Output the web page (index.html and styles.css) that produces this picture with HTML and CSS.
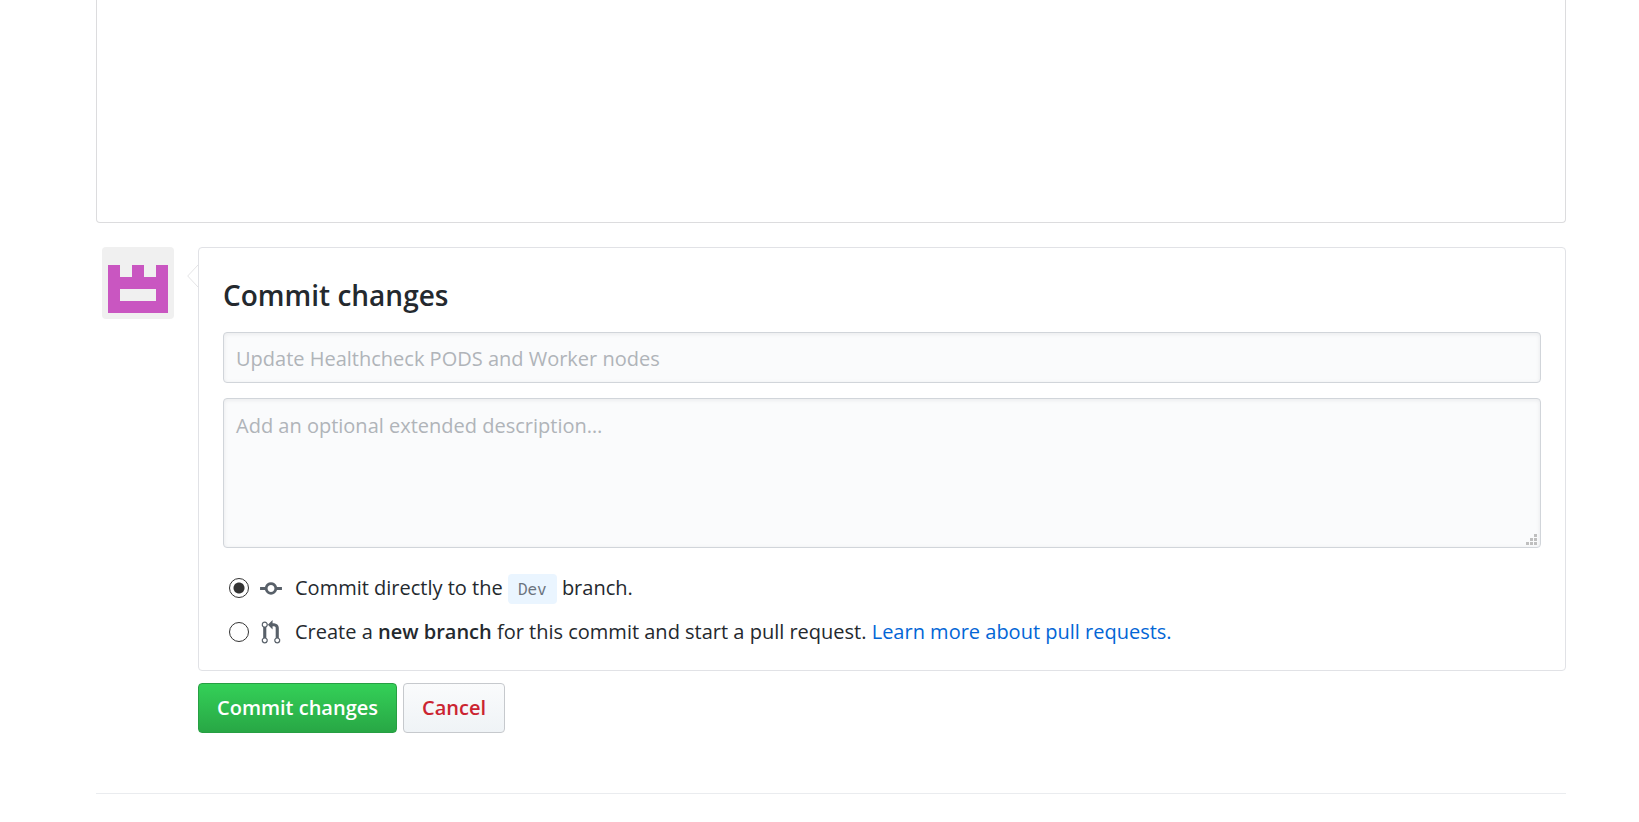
FILE: index.html
```html
<!DOCTYPE html>
<html lang="en">
<head>
<meta charset="utf-8">
<title>Commit changes</title>
<link rel="stylesheet" href="styles.css">
</head>
<body>
<main class="page">
  <div class="editor"></div>
  <form class="commit">
    <svg class="avatar" viewBox="0 0 72 72" role="img" aria-label="User avatar">
      <rect width="72" height="72" fill="#f0f0f0"/>
      <path fill="#c956c1" fill-rule="evenodd" d="M6 18h12v12h12V18h12v12h12V18h12v48H6zM18 42v12h36V42z"/>
    </svg>
    <div class="commit-body">
      <section class="panel">
        <svg class="caret" viewBox="0 0 11 24" aria-hidden="true">
          <path d="M11 1L.7 12 11 23" fill="#fff" stroke="#e4e4e6"/>
        </svg>
        <h1 class="title">Commit changes</h1>
        <input class="field" type="text" aria-label="Commit summary" placeholder="Update Healthcheck PODS and Worker nodes">
        <div class="description">
          <textarea class="field field-area" aria-label="Extended description" placeholder="Add an optional extended description…"></textarea>
          <svg class="grip" viewBox="0 0 12 12" aria-hidden="true">
            <path fill="#bfbfbf" d="M8 0h3v3H8zM4 4h3v3H4zM8 4h3v3H8zM0 8h3v3H0zM4 8h3v3H4zM8 8h3v3H8z"/>
          </svg>
        </div>
        <div class="choices">
          <div class="choice">
            <input class="radio" type="radio" name="target" id="direct" checked>
            <svg class="icon" viewBox="-0.5 0 15 16" aria-hidden="true"><path d="M10.86 7c-.45-1.72-2-3-3.86-3-1.86 0-3.41 1.28-3.86 3H0v2h3.14c.45 1.72 2 3 3.86 3 1.86 0 3.41-1.28 3.86-3H14V7h-3.14zM7 10.2c-1.22 0-2.2-.98-2.2-2.2 0-1.22.98-2.2 2.2-2.2 1.22 0 2.2.98 2.2 2.2 0 1.22-.98 2.2-2.2 2.2z"/></svg>
            <label for="direct">Commit directly to the <code class="branch">Dev</code> branch.</label>
          </div>
          <div class="choice">
            <input class="radio" type="radio" name="target" id="pull">
            <svg class="icon" viewBox="-1.5 0 15 16" aria-hidden="true"><path d="M11 11.28V5c-.03-.78-.34-1.47-.94-2.06C9.46 2.35 8.78 2.03 8 2H7V0L4 3l3 3V4h1c.27.02.48.11.69.31.21.2.3.42.31.69v6.28A1.993 1.993 0 0 0 10 15a1.993 1.993 0 0 0 1-3.72zm-1 2.92c-.66 0-1.2-.55-1.2-1.2 0-.65.55-1.2 1.2-1.2.65 0 1.2.55 1.2 1.2 0 .65-.55 1.2-1.2 1.2zM4 3c0-1.11-.89-2-2-2a1.993 1.993 0 0 0-1 3.72v6.56A1.993 1.993 0 0 0 2 15a1.993 1.993 0 0 0 1-3.72V4.72c.59-.34 1-.98 1-1.72zm-.8 10c0 .66-.55 1.2-1.2 1.2-.65 0-1.2-.55-1.2-1.2 0-.65.55-1.2 1.2-1.2.65 0 1.2.55 1.2 1.2zM2 4.2C1.34 4.2.8 3.65.8 3c0-.65.55-1.2 1.2-1.2.65 0 1.2.55 1.2 1.2 0 .65-.55 1.2-1.2 1.2z"/></svg>
            <label for="pull">Create a <strong>new branch</strong> for this commit and start a pull request. <a class="link" href="#">Learn more about pull requests.</a></label>
          </div>
        </div>
      </section>
      <div class="actions">
        <button class="button button-primary" type="submit">Commit changes</button>
        <button class="button button-cancel" type="button">Cancel</button>
      </div>
    </div>
  </form>
  <hr class="divider">
</main>
</body>
</html>
```
FILE: styles.css
```css
* {
  box-sizing: border-box;
}

body {
  margin: 0;
  background: #fff;
  color: #24292e;
  font: 20px/30px "Segoe UI", "Open Sans", "Noto Sans", sans-serif;
}

.page {
  padding: 0 73px 0 96px;
}

.editor {
  height: 223px;
  border: 1px solid #dcdcde;
  border-top: 0;
  border-radius: 0 0 4px 4px;
}

.commit {
  display: flex;
  align-items: flex-start;
  gap: 24px;
  margin-top: 24px;
  padding-left: 6px;
}

.avatar {
  flex: none;
  width: 72px;
  height: 72px;
  border-radius: 4px;
}

.commit-body {
  flex: 1;
  min-width: 0;
}

.panel {
  position: relative;
  padding: 24px 24px 23px;
  border: 1px solid #e1e2e6;
  border-radius: 4px;
}

.caret {
  position: absolute;
  top: 16px;
  left: -12px;
  width: 11px;
  height: 24px;
}

.title {
  margin: 0 0 13px;
  font-size: 28px;
  line-height: 47px;
  font-weight: 600;
}

.field {
  display: block;
  width: 100%;
  height: 51px;
  margin: 0;
  padding: 9px 12px 8px;
  border: 1px solid #d1d5da;
  border-radius: 4px;
  background: #fafbfc;
  box-shadow: inset 0 1px 4px rgba(27, 31, 35, 0.08);
  color: #24292e;
  font: inherit;
}

.field::placeholder {
  color: #b0b4b9;
  opacity: 1;
}

.description {
  position: relative;
  margin-top: 15px;
}

.field-area {
  height: 150px;
  padding-top: 12px;
  resize: none;
}

.grip {
  position: absolute;
  right: 3px;
  bottom: 2px;
  width: 12px;
  height: 12px;
}

.choices {
  display: grid;
  gap: 14px;
  margin-top: 25px;
}

.choice {
  display: flex;
  align-items: center;
  padding-left: 6px;
}

.radio {
  appearance: none;
  flex: none;
  width: 20px;
  height: 20px;
  margin: 0 10px 0 0;
  border: 1px solid #333;
  border-radius: 50%;
  background: #fff;
}

.radio:checked {
  background: radial-gradient(circle, #333 5px, #fff 6px);
}

.icon {
  flex: none;
  width: 24px;
  height: 25px;
  margin-right: 12px;
  fill: #586069;
}

.branch {
  padding: 4px 10px;
  border-radius: 4px;
  background: #eaf5ff;
  color: #6a737d;
  font: 16px/20px "Noto Sans Mono", "DejaVu Sans Mono", monospace;
}

strong {
  font-weight: 600;
}

.link {
  color: #0366d6;
  text-decoration: none;
}

.actions {
  display: flex;
  gap: 6px;
  margin-top: 12px;
}

.button {
  height: 50px;
  padding: 0 18px;
  border: 1px solid #c6c9cd;
  border-radius: 4px;
  font: inherit;
  font-weight: 600;
}

.button-primary {
  border-color: #279f43;
  background: linear-gradient(#34d058, #28a745);
  color: #fff;
}

.button-cancel {
  background: linear-gradient(#fafbfc, #eff3f6);
  color: #cb2431;
}

.divider {
  height: 1px;
  margin: 60px 0 0;
  border: 0;
  background: #eaecef;
}
```
